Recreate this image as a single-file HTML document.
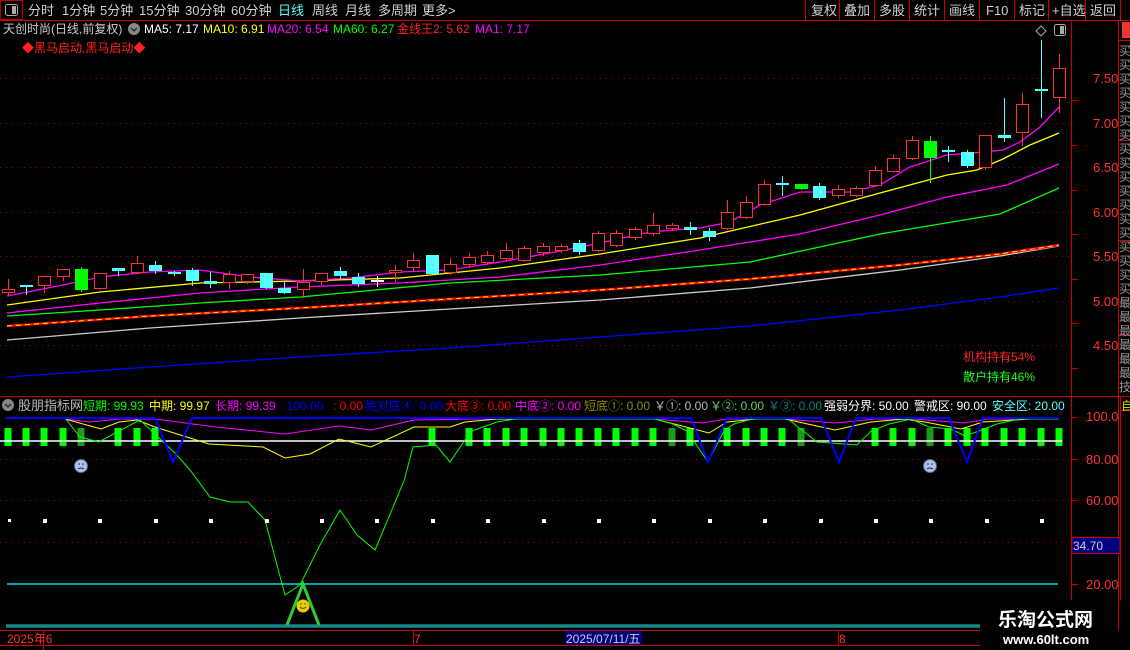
<!DOCTYPE html>
<html><head><meta charset="utf-8"><style>
body{margin:0;background:#000;width:1130px;height:650px;overflow:hidden;font-family:"Liberation Sans","Noto Sans CJK SC",sans-serif}
svg{position:absolute;left:0;top:0}
text{font-family:"Liberation Sans","Noto Sans CJK SC",sans-serif}
</style></head><body>
<svg id="s" width="1130" height="650" viewBox="0 0 1130 650" xmlns="http://www.w3.org/2000/svg">
<rect width="1130" height="650" fill="#000"/>
<g font-size="13" fill="#d0d0d0">
<rect x="0.5" y="0.5" width="22" height="19" fill="none" stroke="#b00" />
<rect x="5.5" y="4.5" width="12" height="11" rx="2" fill="none" stroke="#aaa"/><rect x="12" y="6" width="4" height="8" fill="#aaa"/>
<text x="28" y="15">分时</text><text x="62" y="15">1分钟</text><text x="100" y="15">5分钟</text><text x="139" y="15">15分钟</text><text x="185" y="15">30分钟</text><text x="231" y="15">60分钟</text><text x="278" y="15" fill="#5ff">日线</text><text x="312" y="15">周线</text><text x="345" y="15">月线</text><text x="378" y="15">多周期</text><text x="422" y="15">更多&gt;</text>
<text x="811" y="15">复权</text><text x="844" y="15">叠加</text><text x="879" y="15">多股</text><text x="914" y="15">统计</text><text x="949" y="15">画线</text><text x="986" y="15">F10</text><text x="1019" y="15">标记</text><text x="1052" y="15">+自选</text><text x="1090" y="15">返回</text>
</g>
<g stroke="#c00" stroke-width="1">
<line x1="0" y1="20.5" x2="1130" y2="20.5"/>
<line x1="805.5" y1="0" x2="805.5" y2="20"/><line x1="839.5" y1="0" x2="839.5" y2="20"/><line x1="874.5" y1="0" x2="874.5" y2="20"/><line x1="909.5" y1="0" x2="909.5" y2="20"/><line x1="944.5" y1="0" x2="944.5" y2="20"/><line x1="979.5" y1="0" x2="979.5" y2="20"/><line x1="1014.5" y1="0" x2="1014.5" y2="20"/><line x1="1048.5" y1="0" x2="1048.5" y2="20"/><line x1="1085.5" y1="0" x2="1085.5" y2="20"/><line x1="1120.5" y1="0" x2="1120.5" y2="20"/>
<line x1="1071.5" y1="21" x2="1071.5" y2="396"/>
<line x1="1118.5" y1="21" x2="1118.5" y2="630"/>
<line x1="0" y1="396.5" x2="1130" y2="396.5"/>
<line x1="1071.5" y1="397" x2="1071.5" y2="600"/>
<line x1="1120.5" y1="397" x2="1120.5" y2="600"/>
<line x1="0" y1="630.5" x2="980" y2="630.5"/><line x1="0" y1="645.5" x2="980" y2="645.5"/>
<line x1="1118" y1="40.5" x2="1130" y2="40.5"/><line x1="1118" y1="140.5" x2="1130" y2="140.5"/><line x1="1118" y1="240.5" x2="1130" y2="240.5"/><line x1="1118" y1="335.5" x2="1130" y2="335.5"/><line x1="1121" y1="410.5" x2="1130" y2="410.5"/>
</g>
<rect x="1122" y="22" width="8" height="16" fill="#e33"/>
<g fill="#999" font-size="12" id="strip"></g>
<text x="1121" y="410" fill="#dd0" font-size="12">自</text>
<g font-size="12">
<text x="3" y="33" fill="#ccc">天创时尚(日线,前复权)</text>
<circle cx="134" cy="29" r="6" fill="#888"/><path d="M131 28 l3 3 l3 -3" stroke="#222" fill="none" stroke-width="1.3"/>
<text x="144" y="33" fill="#fff">MA5: 7.17</text>
<text x="203" y="33" fill="#ff0">MA10: 6.91</text>
<text x="267" y="33" fill="#f0f">MA20: 6.54</text>
<text x="333" y="33" fill="#0f0">MA60: 6.27</text>
<text x="397" y="33" fill="#f22">金线王2: 5.62</text>
<text x="475" y="33" fill="#f0f">MA1: 7.17</text>
<text x="22" y="52" fill="#f22">◆黑马启动,黑马启动◆</text>
</g>
<path d="M1041 26 l5 5 l-5 5 l-5 -5z" fill="none" stroke="#aaa"/>
<rect x="1054.5" y="24.5" width="11" height="11" rx="2" fill="none" stroke="#aaa"/><rect x="1060" y="26" width="4" height="8" fill="#aaa"/>
<g stroke="#a00" stroke-dasharray="1 5">
<line x1="0" y1="78.5" x2="1071" y2="78.5"/><line x1="0" y1="123.5" x2="1071" y2="123.5"/><line x1="0" y1="167.5" x2="1071" y2="167.5"/><line x1="0" y1="212.5" x2="1071" y2="212.5"/><line x1="0" y1="256.5" x2="1071" y2="256.5"/><line x1="0" y1="301.5" x2="1071" y2="301.5"/><line x1="0" y1="345.5" x2="1071" y2="345.5"/>
<line x1="0" y1="459.5" x2="1071" y2="459.5"/><line x1="0" y1="500.5" x2="1071" y2="500.5"/><line x1="0" y1="542.5" x2="1071" y2="542.5"/>
</g>
<g fill="#f33" font-size="13">
<text x="1093" y="83">7.50</text><text x="1093" y="128">7.00</text><text x="1093" y="172">6.50</text><text x="1093" y="217">6.00</text><text x="1093" y="261">5.50</text><text x="1093" y="306">5.00</text><text x="1093" y="350">4.50</text>
<text x="1086" y="421">100.0</text><text x="1086" y="464">80.00</text><text x="1086" y="505">60.00</text><text x="1086" y="589">20.00</text>
</g>
<g stroke="#c00"><line x1="1072" y1="100.5" x2="1078" y2="100.5"/><line x1="1072" y1="145.5" x2="1078" y2="145.5"/><line x1="1072" y1="190.5" x2="1078" y2="190.5"/><line x1="1072" y1="234.5" x2="1078" y2="234.5"/><line x1="1072" y1="279.5" x2="1078" y2="279.5"/><line x1="1072" y1="323.5" x2="1078" y2="323.5"/><line x1="1072" y1="368.5" x2="1078" y2="368.5"/>
<line x1="1072" y1="417.5" x2="1078" y2="417.5"/><line x1="1072" y1="459.5" x2="1078" y2="459.5"/><line x1="1072" y1="500.5" x2="1078" y2="500.5"/><line x1="1072" y1="584.5" x2="1078" y2="584.5"/></g>
<rect x="1072" y="537.5" width="48" height="16" fill="#000080" stroke="#c00"/>
<text x="1073" y="550" fill="#ccc" font-size="12">34.70</text>
<g fill="none" stroke-width="1.3">
<polyline stroke="#00f" points="7,377 150,367 300,357 450,348 600,337 750,326 900,310 1000,297 1059,288"/>
<polyline stroke="#ccc" points="7,340 150,328 300,318 450,309 600,300 750,288 900,270 1000,256 1059,246"/>
<polyline stroke="#f00" stroke-width="2.5" points="7,326 150,316 300,308 450,299 600,290 750,279 900,265 1000,254 1059,245"/>
<polyline stroke="#ff0" stroke-width="1" stroke-dasharray="5 4" points="7,326 150,316 300,308 450,299 600,290 750,279 900,265 1000,254 1059,245"/>
<polyline stroke="#0f0" points="7,316 100,310 200,303 300,297 450,283 600,275 750,262 880,234 1000,214 1059,188"/>
<polyline stroke="#f0f" points="7,313 100,303 200,293 300,287 400,283 500,277 600,265 700,250 800,234 880,215 947,197 1007,185 1059,164"/>
<polyline stroke="#ff0" points="7,305 100,292 200,283 300,281 400,278 500,268 600,254 700,238 800,215 880,193 947,175 977,170 1003,159 1030,145 1059,133"/>
<polyline stroke="#f0f" points="7,296 63,285 100,277 150,272 200,270 250,277 300,281 350,278 400,272 450,270 500,262 550,253 600,243 650,232 700,228 730,222 760,205 800,192 850,192 880,185 910,167 947,155 973,153 1003,150 1020,142 1040,127 1059,107"/>
</g>
<g id="candles"></g>
<text x="963" y="361" fill="#f22" font-size="12">机构持有54%</text>
<text x="963" y="381" fill="#2f2" font-size="12">散户持有46%</text>
<g font-size="12">
<circle cx="8" cy="405" r="6" fill="#888"/><path d="M5 404 l3 3 l3 -3" stroke="#222" fill="none" stroke-width="1.3"/>
<text x="18" y="410" fill="#bbb" font-size="13">股朋指标网</text>
<text x="83" y="410" fill="#0f0">短期: 99.93</text>
<text x="149" y="410" fill="#ff0">中期: 99.97</text>
<text x="215" y="410" fill="#f0f">长期: 99.39</text>
<text x="280" y="410" fill="#00f">: 100.00</text>
<text x="333" y="410" fill="#f00">: 0.00</text>
<text x="365" y="410" fill="#00f">绝对底④: 0.00</text>
<text x="445" y="410" fill="#f00">大底③: 0.00</text>
<text x="515" y="410" fill="#f0f">中底②: 0.00</text>
<text x="584" y="410" fill="#8b8b00">短底①: 0.00</text>
<text x="654" y="410" fill="#bbb">￥①: 0.00</text>
<text x="710" y="410" fill="#6c6">￥②: 0.00</text>
<text x="768" y="410" fill="#088">￥③: 0.00</text>
<text x="824" y="410" fill="#fff">强弱分界: 50.00</text>
<text x="914" y="410" fill="#fff">警戒区: 90.00</text>
<text x="992" y="410" fill="#5ff">安全区: 20.00</text>
</g>
<g id="bars"></g>
<line x1="0" y1="441" x2="1062" y2="441" stroke="#fff" stroke-width="1.5"/>
<g fill="none" stroke-width="1">
<polyline stroke="#f0f" points="65,419 90,422 119,419 155,419 216,427 285,434 339,426 371,430 414,420 479,419 655,419 702,423 727,419 785,419 835,423 875,419 914,419 965,423 987,419 1059,419"/>
<polyline stroke="#ff0" points="65,419 101,429 119,422 137,420 155,427 209,444 263,447 285,458 310,454 339,439 371,447 414,427 450,427 465,422 497,419 655,419 709,433 727,422 756,419 785,419 835,430 871,422 904,419 925,422 961,429 983,422 1030,419 1059,419"/>
<polyline stroke="#0f0" points="65,418 80,437 99,442 119,431 140,420 175,453 190,470 210,497 230,502 248,502 265,520 285,595 300,585 320,545 340,510 357,535 375,550 404,481 413,447 436,445 450,462 465,440 472,431 497,422 515,419 655,419 673,424 687,431 708,462 724,431 734,424 752,419 788,419 817,442 857,445 871,431 889,424 911,419 929,427 951,429 965,436 979,431 997,424 1019,419 1059,419"/>
<polyline stroke="#00f" stroke-width="2" points="6,418 155,418 173,462 192,418 691,418 708,462 727,418 821,418 839,462 856,418 949,418 967,462 983,418 1059,418"/>
</g>
<line x1="7" y1="584" x2="1058" y2="584" stroke="#0dd" stroke-width="1.5"/>
<line x1="6" y1="626" x2="980" y2="626" stroke="#178787" stroke-width="3.5"/>
<g id="dots" fill="#fff"></g>
<path d="M287 625 L303 584 L319 625" stroke="#3c3" stroke-width="3" fill="none"/>
<circle cx="303" cy="606" r="6.5" fill="#ec0"/><path d="M300 607 q3 3 6 0" stroke="#640" fill="none"/><circle cx="301" cy="604" r=".8" fill="#640"/><circle cx="305" cy="604" r=".8" fill="#640"/>
<g><circle cx="81" cy="466" r="6.5" fill="#aac4f0" stroke="#567"/><path d="M78 469 q3 -2 6 0" stroke="#123" fill="none"/><circle cx="79" cy="464" r=".8" fill="#123"/><circle cx="83" cy="464" r=".8" fill="#123"/></g>
<g><circle cx="930" cy="466" r="6.5" fill="#aac4f0" stroke="#567"/><path d="M927 469 q3 -2 6 0" stroke="#123" fill="none"/><circle cx="928" cy="464" r=".8" fill="#123"/><circle cx="932" cy="464" r=".8" fill="#123"/></g>
<g stroke="#c00"><line x1="43.5" y1="631" x2="43.5" y2="650"/><line x1="413.5" y1="631" x2="413.5" y2="645"/><line x1="838.5" y1="631" x2="838.5" y2="645"/></g>
<text x="7" y="643" fill="#f33" font-size="12">2025年6</text>
<text x="414" y="643" fill="#f33" font-size="12">7</text>
<rect x="565" y="631" width="77" height="14" fill="#000080"/>
<text x="566" y="643" fill="#ccc" font-size="12">2025/07/11/五</text>
<text x="839" y="643" fill="#f33" font-size="12">8</text>
<text x="998" y="626" fill="#fff" font-size="19" font-weight="bold">乐淘公式网</text>
<text x="1003" y="644" fill="#fff" font-size="13" font-weight="bold" font-family="Liberation Serif,serif">www.60lt.com</text>
</svg>
<script>
var NS="http://www.w3.org/2000/svg";
function el(p,t,a){var e=document.createElementNS(NS,t);for(var k in a)e.setAttribute(k,a[k]);p.appendChild(e);return e;}
var C=[["r",289,292,279,296],["c",285,287,285,295],["r",276,285,276,293],["r",269,276,269,281],["g",269,290,267,292],["r",273,288,273,290],["c",268,271,268,276],["r",263,272,256,274],["c",265,271,261,274],["c",272,274,271,276],["c",270,281,268,286],["c",281,284,272,288],["r",274,282,271,289],["r",274,281,274,284],["c",273,288,273,289],["c",288,293,281,294],["r",282,289,269,298],["r",273,281,273,285],["c",271,276,267,279],["c",277,284,273,287],["w",280,281,276,287],["r",270,272,265,282],["r",260,267,253,272],["c",255,274,255,275],["r",264,272,258,275],["r",257,264,253,268],["r",255,262,251,265],["r",250,258,243,262],["r",248,260,246,262],["r",246,252,243,256],["r",246,250,244,253],["c",243,252,240,255],["r",233,250,231,252],["r",233,245,230,247],["r",229,237,227,240],["r",225,233,213,236],["r",225,228,223,231],["c",227,230,222,235],["c",231,237,228,241],["r",212,228,200,230],["r",202,217,196,219],["r",184,204,180,206],["c",183,184,176,196],["g",184,189,184,190],["c",186,198,183,200],["r",189,195,185,198],["r",188,195,186,197],["r",170,185,166,187],["r",158,171,155,173],["r",140,158,136,160],["g",141,158,136,183],["c",150,152,146,162],["c",152,166,150,168],["r",135,167,135,170],["c",135,138,98,142],["r",104,132,93,146],["c",89,91,40,118],["r",68,97,54,113]];
var col={r:"#ff3232",c:"#54ffff",g:"#00ff00",w:"#ffffff"};
var g=document.getElementById("candles");
C.forEach(function(d,i){var x=Math.round(7.5+18.45*i)+0.5,c=col[d[0]];
el(g,"line",{x1:x,x2:x,y1:d[3],y2:d[4],stroke:c});
if(d[0]=="r"){el(g,"rect",{x:x-6,y:d[1]+0.5,width:12,height:Math.max(1,d[2]-d[1]),fill:"#000",stroke:c});el(g,"line",{x1:x,x2:x,y1:d[3],y2:d[1],stroke:c});el(g,"line",{x1:x,x2:x,y1:d[2],y2:d[4],stroke:c});}
else el(g,"rect",{x:x-6.5,y:d[1],width:13,height:Math.max(2,d[2]-d[1]),fill:c});});
var B=[0,1,2,3,4,6,7,8,23,25,26,27,28,29,30,31,32,33,34,35,36,37,39,40,41,42,43,47,48,49,50,51,52,53,54,55,56,57],dim=[4,36,43,50];
var b=document.getElementById("bars");
B.forEach(function(i){var x=Math.round(7.5+18.45*i);el(b,"rect",{x:x-3.5,y:428,width:7,height:18,fill:dim.indexOf(i)>=0?"#1c9a1c":"#00ff00"});});
var dg=document.getElementById("dots");
el(dg,"rect",{x:8,y:519,width:3,height:3});
for(var x=44;x<1060;x+=55.4)el(dg,"rect",{x:Math.round(x)-1,y:519,width:4,height:4});
var st=document.getElementById("strip"),ch="买买买买买买买买买买买买买买买买买买最最最最最最技技技";
for(var k=0;k<25;k++){var t=el(st,"text",{x:1119,y:55+k*14});t.textContent=ch[k];}
</script>
</body></html>
